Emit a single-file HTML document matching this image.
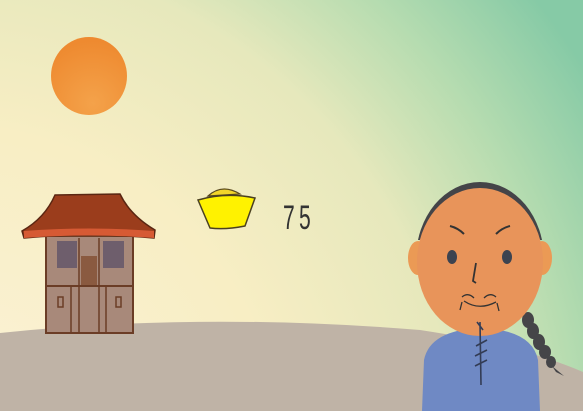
<!DOCTYPE html>
<html><head><meta charset="utf-8"><style>
html,body{margin:0;padding:0;width:583px;height:414px;overflow:hidden;background:#fff}
svg{display:block}
</style></head><body>
<svg width="583" height="414" viewBox="0 0 583 414" xmlns="http://www.w3.org/2000/svg">
<defs>
<radialGradient id="sky" cx="-60" cy="470" r="760" gradientUnits="userSpaceOnUse">
<stop offset="0" stop-color="#fbf3da"/>
<stop offset="0.45" stop-color="#f8eec4"/>
<stop offset="0.68" stop-color="#e6e8bc"/>
<stop offset="0.84" stop-color="#b6dcb0"/>
<stop offset="1" stop-color="#86caa6"/>
</radialGradient>
<radialGradient id="sun" cx="0.55" cy="0.85" r="0.8">
<stop offset="0" stop-color="#f4a24a"/>
<stop offset="1" stop-color="#ee8a30"/>
</radialGradient>
<clipPath id="hairclip"><rect x="400" y="170" width="170" height="70"/></clipPath>
</defs>
<rect width="583" height="414" fill="url(#sky)"/>
<path d="M0 333 Q 200 312 420 330 Q 520 345 583 372 L583 411 L0 411 Z" fill="#bfb3a6"/>
<rect y="411" width="583" height="3" fill="#fff"/>
<ellipse cx="89" cy="76" rx="38" ry="39" fill="url(#sun)"/>
<rect x="46" y="236" width="87" height="97" fill="#a8897a" stroke="#6b3d26" stroke-width="2"/>
<rect x="57" y="241" width="20" height="27" fill="#6e5e6c"/>
<rect x="103" y="241" width="21" height="27" fill="#6e5e6c"/>
<rect x="81" y="256" width="16" height="30" fill="#8a5a40"/>
<line x1="46" y1="286" x2="133" y2="286" stroke="#6b3d26" stroke-width="2"/>
<line x1="79" y1="238" x2="79" y2="333" stroke="#6b3d26" stroke-width="1.5"/>
<line x1="99" y1="238" x2="99" y2="333" stroke="#6b3d26" stroke-width="1.5"/>
<line x1="71" y1="286" x2="71" y2="333" stroke="#6b3d26" stroke-width="1.5"/>
<line x1="106" y1="286" x2="106" y2="333" stroke="#6b3d26" stroke-width="1.5"/>
<rect x="58" y="297" width="5" height="10" fill="none" stroke="#6b3d26" stroke-width="1.5"/>
<rect x="116" y="297" width="5" height="10" fill="none" stroke="#6b3d26" stroke-width="1.5"/>
<path d="M55 195 L120 194 Q130 215 155 230 L154 238 Q90 232 24 238 L22 231 Q45 218 55 195 Z" fill="#9b3d1c" stroke="#5a2612" stroke-width="1.5"/>
<path d="M24 231 Q90 226 154 231 L154 238 Q90 233 24 238 Z" fill="#d65a34"/>
<path d="M208 196 Q222 183 240 194 Z" fill="#f2d52a" stroke="#5a4a20" stroke-width="1.2"/>
<path d="M198 200 Q226 192 255 198 L245 226 Q225 230 210 228 Z" fill="#fff200" stroke="#4a4020" stroke-width="1.5"/>
<text x="0" y="0" font-family="Liberation Sans, sans-serif" font-size="34" fill="#333" letter-spacing="7" transform="translate(283 229) scale(0.62 1)">75</text>
<g fill="#454548">
<ellipse cx="528" cy="320" rx="6" ry="8"/><ellipse cx="533" cy="331" rx="6" ry="8"/>
<ellipse cx="539" cy="342" rx="6" ry="8"/><ellipse cx="545" cy="352" rx="6" ry="7"/>
<ellipse cx="551" cy="362" rx="5" ry="6"/><path d="M552 366 L564 376 L556 372 Z"/>
</g>
<path d="M422 411 L424 360 Q430 330 481 328 Q532 330 538 360 L540 411 Z" fill="#6f89c4"/>
<ellipse cx="418" cy="258" rx="10" ry="17" fill="#eb9a55"/>
<ellipse cx="542" cy="258" rx="10" ry="17" fill="#eb9a55"/>
<ellipse cx="480" cy="259" rx="64" ry="77" fill="#444448" clip-path="url(#hairclip)"/>
<ellipse cx="480" cy="262" rx="63" ry="74" fill="#e8945a"/>
<path d="M450 226 Q458 228 464 234" stroke="#333" stroke-width="2" fill="none"/>
<path d="M510 226 Q502 228 496 234" stroke="#333" stroke-width="2" fill="none"/>
<ellipse cx="452" cy="257" rx="5" ry="7" fill="#3c4350"/>
<ellipse cx="507" cy="257" rx="5" ry="7" fill="#3c4350"/>
<path d="M476 263 L473 281 L476 283" stroke="#333" stroke-width="1.8" fill="none"/>
<path d="M462 297 Q468 292 474 298 M484 298 Q490 292 496 297 M464 301 Q479 311 496 302 M462 302 L460 310 M497 303 L499 311" stroke="#333" stroke-width="1.3" fill="none"/>
<path d="M480 322 L481 385 M476 346 L487 340 M475 356 L487 350 M475 366 L487 360 M477 322 L483 330" stroke="#333c55" stroke-width="1.6" fill="none"/>
</svg>
</body></html>
